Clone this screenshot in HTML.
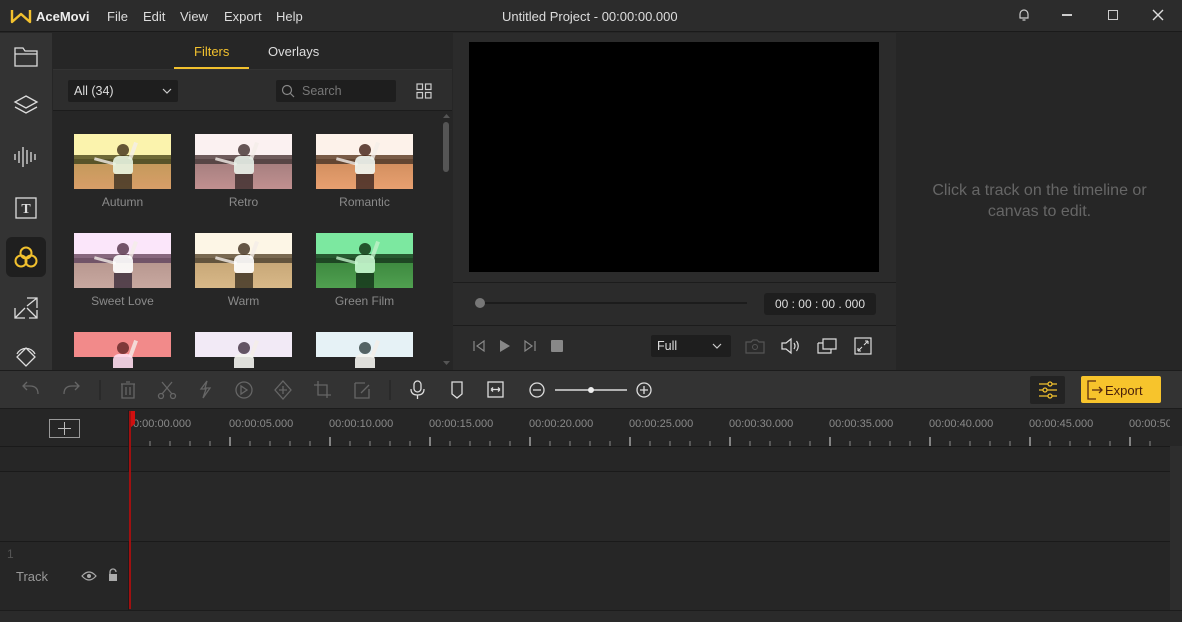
<!DOCTYPE html>
<html><head><meta charset="utf-8"><style>
*{box-sizing:border-box;margin:0;padding:0}
body{width:1182px;height:622px;overflow:hidden;background:#262626;font-family:"Liberation Sans","DejaVu Sans",sans-serif;color:#ddd;position:relative;font-size:12px}
.a{position:absolute}
.th{position:absolute;width:97px;height:55px;overflow:hidden}
.th .sky{position:absolute;left:0;top:0;width:100%;height:45%}
.th .tr{position:absolute;left:0;top:38%;width:100%;height:18%;opacity:.9}
.th .fd{position:absolute;left:0;top:55%;width:100%;height:45%}
.th .hair{position:absolute;left:43px;top:10px;width:12px;height:12px;border-radius:50%;opacity:.85}
.th .shirt{position:absolute;left:39px;top:22px;width:20px;height:18px;border-radius:6px 6px 3px 3px;background:#f4f4f0;opacity:.9}
.th .legs{position:absolute;left:40px;top:40px;width:18px;height:15px;opacity:.8}
.th .arm{position:absolute;left:57px;top:8px;width:4px;height:18px;background:#f4eee8;transform:rotate(20deg);opacity:.8}
.th .arm2{position:absolute;left:20px;top:26px;width:22px;height:3px;background:#f4eee8;transform:rotate(15deg);opacity:.8}
.lb{position:absolute;width:97px;text-align:center;color:#8a8a8a;font-size:12px}
.ico{position:absolute}
.tl{position:absolute;top:418px;color:#8a8a8a;font-size:11px}
</style></head><body>
<div class="a" style="left:0;top:0;width:1182px;height:32px;background:#2c2c2c;border-bottom:1px solid #1a1a1a"></div>
<svg class="ico" style="left:10px;top:8px" width="22" height="16" viewBox="0 0 22 16"><path d="M2 2 L2 14 L11 6 L20 14 L20 2" fill="none" stroke="#f2c12e" stroke-width="2.4" stroke-linejoin="round"/></svg>
<div class="a" style="left:36px;top:9px;font-weight:bold;font-size:13px;color:#eee">AceMovi</div>
<div class="a" style="left:107px;top:9px;font-size:13px;color:#ddd">File</div>
<div class="a" style="left:143px;top:9px;font-size:13px;color:#ddd">Edit</div>
<div class="a" style="left:180px;top:9px;font-size:13px;color:#ddd">View</div>
<div class="a" style="left:224px;top:9px;font-size:13px;color:#ddd">Export</div>
<div class="a" style="left:276px;top:9px;font-size:13px;color:#ddd">Help</div>
<div class="a" style="left:502px;top:9px;font-size:13px;color:#ddd">Untitled Project - 00:00:00.000</div>
<svg class="ico" style="left:1016px;top:7px" width="16" height="16" viewBox="0 0 16 16"><path d="M4 11 V7 a4 4 0 0 1 8 0 V11 H3.5 H12.5 M6.5 13 h3" fill="none" stroke="#ccc" stroke-width="1.2"/></svg>
<div class="a" style="left:1062px;top:14px;width:10px;height:2px;background:#ccc"></div>
<div class="a" style="left:1108px;top:10px;width:10px;height:10px;border:1.3px solid #ccc"></div>
<svg class="ico" style="left:1152px;top:9px" width="12" height="12"><path d="M1 1L11 11M11 1L1 11" stroke="#ddd" stroke-width="1.4"/></svg>

<div class="a" style="left:0;top:33px;width:52px;height:337px;background:#333"></div>
<svg class="ico" style="left:14px;top:46px" width="24" height="22" viewBox="0 0 24 22"><path d="M1 2h8l2 3h12v15H1z M1 8h22" fill="none" stroke="#ddd" stroke-width="1.3"/></svg>
<svg class="ico" style="left:13px;top:94px" width="26" height="26" viewBox="0 0 26 26"><path d="M13 2 L24 8 L13 14 L2 8Z M2 13 L13 19 L24 13" fill="none" stroke="#ddd" stroke-width="1.3"/></svg>
<svg class="ico" style="left:13px;top:146px" width="26" height="22" viewBox="0 0 26 22"><path d="M2 8v6M6 5v12M10 1v20M14 4v14M18 6v10M22 8v6" stroke="#ddd" stroke-width="1.3"/></svg>
<svg class="ico" style="left:15px;top:197px" width="22" height="22" viewBox="0 0 22 22"><rect x="1" y="1" width="20" height="20" fill="none" stroke="#ddd" stroke-width="1.3"/><text x="11" y="16" text-anchor="middle" font-family="Liberation Serif" font-weight="bold" font-size="14" fill="#ddd">T</text></svg>
<div class="a" style="left:6px;top:237px;width:40px;height:40px;background:#1f1f1f;border-radius:6px"></div>
<svg class="ico" style="left:12px;top:243px" width="28" height="28" viewBox="0 0 28 28"><g fill="none" stroke="#f2c12e" stroke-width="2"><circle cx="14" cy="10" r="5.5"/><circle cx="9" cy="18" r="5.5"/><circle cx="19" cy="18" r="5.5"/></g></svg>
<svg class="ico" style="left:13px;top:296px" width="26" height="24" viewBox="0 0 26 24"><path d="M2 12 L2 22 L12 22 M2 22 L12 12 M14 10 L24 2 M14 2 H24 V12 M14 12 L24 22 M24 14 V22 H16" fill="none" stroke="#ddd" stroke-width="1.3"/></svg>
<svg class="ico" style="left:13px;top:342px" width="26" height="28" viewBox="0 0 26 28"><path d="M13 6 L22 15 L13 24 L4 15Z M4 12 a10 10 0 0 1 18 0" fill="none" stroke="#ddd" stroke-width="1.3"/></svg>

<div class="a" style="left:53px;top:33px;width:399px;height:37px;background:#262626;border-bottom:1px solid #333"></div>
<div class="a" style="left:194px;top:44px;font-size:13px;color:#f2c12e">Filters</div>
<div class="a" style="left:174px;top:67px;width:75px;height:2px;background:#f2c12e"></div>
<div class="a" style="left:268px;top:44px;font-size:13px;color:#ddd">Overlays</div>
<div class="a" style="left:53px;top:70px;width:399px;height:41px;background:#2d2d2d;border-bottom:1px solid #1c1c1c"></div>
<div class="a" style="left:68px;top:80px;width:110px;height:22px;background:#1e1e1e;border-radius:2px"></div>
<div class="a" style="left:74px;top:84px;font-size:12.5px;color:#ddd">All (34)</div>
<svg class="ico" style="left:162px;top:88px" width="10" height="6"><path d="M1 1L5 5L9 1" fill="none" stroke="#ccc" stroke-width="1.2"/></svg>
<div class="a" style="left:276px;top:80px;width:120px;height:22px;background:#1e1e1e;border-radius:2px"></div>
<svg class="ico" style="left:281px;top:84px" width="14" height="14"><circle cx="6" cy="6" r="4.5" fill="none" stroke="#888" stroke-width="1.2"/><path d="M9.5 9.5L13 13" stroke="#888" stroke-width="1.2"/></svg>
<div class="a" style="left:302px;top:84px;font-size:12.5px;color:#777">Search</div>
<svg class="ico" style="left:416px;top:83px" width="16" height="16"><g fill="none" stroke="#ccc" stroke-width="1.2"><rect x="1" y="1" width="5.5" height="5.5"/><rect x="9.5" y="1" width="5.5" height="5.5"/><rect x="1" y="9.5" width="5.5" height="5.5"/><rect x="9.5" y="9.5" width="5.5" height="5.5"/></g></svg>
<div class="a" style="left:442px;top:112px;width:10px;height:258px;background:#262626"></div>
<div class="a" style="left:443px;top:122px;width:6px;height:50px;background:#555;border-radius:3px"></div>
<svg class="ico" style="left:442px;top:113px" width="9" height="6"><path d="M1 5L4.5 1L8 5Z" fill="#555"/></svg>
<svg class="ico" style="left:442px;top:360px" width="9" height="6"><path d="M1 1L4.5 5L8 1Z" fill="#555"/></svg>

<div class="th" style="left:74px;top:134px"><div class="sky" style="background:#fbf3ad"></div><div class="tr" style="background:#5e5a2a"></div><div class="fd" style="background:linear-gradient(#c59a5c,#d89e68)"></div><div class="hair" style="background:#4a3a20"></div><div class="arm"></div><div class="arm2"></div><div class="shirt" style="background:#e8f4e0"></div><div class="legs" style="background:#3a3020"></div></div>
<div class="th" style="left:195px;top:134px"><div class="sky" style="background:#fbf1f1"></div><div class="tr" style="background:#5e4a4a"></div><div class="fd" style="background:linear-gradient(#a88080,#c09090)"></div><div class="hair" style="background:#4a3a3a"></div><div class="arm"></div><div class="arm2"></div><div class="shirt" style="background:#e8f0e8"></div><div class="legs" style="background:#3a2a2a"></div></div>
<div class="th" style="left:316px;top:134px"><div class="sky" style="background:#fdf2ea"></div><div class="tr" style="background:#6a4a34"></div><div class="fd" style="background:linear-gradient(#d49060,#e8a070)"></div><div class="hair" style="background:#4a2a20"></div><div class="arm"></div><div class="arm2"></div><div class="shirt" style="background:#f0f6f2"></div><div class="legs" style="background:#3a2420"></div></div>
<div class="lb" style="left:74px;top:195px">Autumn</div>
<div class="lb" style="left:195px;top:195px">Retro</div>
<div class="lb" style="left:316px;top:195px">Romantic</div>

<div class="th" style="left:74px;top:233px"><div class="sky" style="background:#fbe6fa"></div><div class="tr" style="background:#7a5a70"></div><div class="fd" style="background:linear-gradient(#b89890,#c8a8a0)"></div><div class="hair" style="background:#5a3a50"></div><div class="arm"></div><div class="arm2"></div><div class="shirt" style="background:#fff"></div><div class="legs" style="background:#3a2a3a"></div></div>
<div class="th" style="left:195px;top:233px"><div class="sky" style="background:#fdf6e6"></div><div class="tr" style="background:#6a5a40"></div><div class="fd" style="background:linear-gradient(#c8a878,#d8b888)"></div><div class="hair" style="background:#4a3a28"></div><div class="arm"></div><div class="arm2"></div><div class="shirt" style="background:#fff"></div><div class="legs" style="background:#3a3020"></div></div>
<div class="th" style="left:316px;top:233px"><div class="sky" style="background:#7ce8a0"></div><div class="tr" style="background:#1e4a24"></div><div class="fd" style="background:linear-gradient(#3e8a40,#50a050)"></div><div class="hair" style="background:#143a18"></div><div class="arm" style="background:#c0f0c8"></div><div class="arm2" style="background:#c0f0c8"></div><div class="shirt" style="background:#c8f8d0"></div><div class="legs" style="background:#123018"></div></div>
<div class="lb" style="left:74px;top:294px">Sweet Love</div>
<div class="lb" style="left:195px;top:294px">Warm</div>
<div class="lb" style="left:316px;top:294px">Green Film</div>

<div class="th" style="left:74px;top:332px;height:36px"><div class="sky" style="background:#f28a8a;height:70%"></div><div class="hair" style="background:#6a2a2a"></div><div class="arm"></div><div class="shirt" style="background:#fde"></div></div>
<div class="th" style="left:195px;top:332px;height:36px"><div class="sky" style="background:#f2eaf6;height:70%"></div><div class="hair" style="background:#4a3a4a"></div><div class="arm"></div><div class="shirt"></div></div>
<div class="th" style="left:316px;top:332px;height:36px"><div class="sky" style="background:#e6f2f6;height:70%"></div><div class="hair" style="background:#3a4a4a"></div><div class="arm"></div><div class="shirt"></div></div>

<div class="a" style="left:453px;top:33px;width:443px;height:337px;background:#2b2b2b"></div>
<div class="a" style="left:469px;top:42px;width:410px;height:230px;background:#000"></div>
<div class="a" style="left:453px;top:282px;width:443px;height:1px;background:#1c1c1c"></div>
<div class="a" style="left:453px;top:325px;width:443px;height:1px;background:#1c1c1c"></div>
<div class="a" style="left:480px;top:302px;width:267px;height:2px;background:#1c1c1c"></div>
<div class="a" style="left:475px;top:298px;width:10px;height:10px;border-radius:50%;background:#777"></div>
<div class="a" style="left:764px;top:293px;width:112px;height:22px;background:#1e1e1e;border-radius:3px"></div>
<div class="a" style="left:764px;top:297px;width:112px;text-align:center;font-size:12px;color:#ddd;white-space:pre">00 : 00 : 00 . 000</div>
<svg class="ico" style="left:472px;top:339px" width="14" height="14"><path d="M2 2v10M12 2L5 7L12 12Z" fill="none" stroke="#888" stroke-width="1.2"/></svg>
<svg class="ico" style="left:498px;top:339px" width="14" height="14"><path d="M2 1L12 7L2 13Z" fill="#888"/></svg>
<svg class="ico" style="left:523px;top:339px" width="14" height="14"><path d="M12 2v10M2 2L9 7L2 12Z" fill="none" stroke="#888" stroke-width="1.2"/></svg>
<div class="a" style="left:551px;top:340px;width:12px;height:12px;background:#888;border-radius:1px"></div>
<div class="a" style="left:651px;top:335px;width:80px;height:22px;background:#1e1e1e;border-radius:2px"></div>
<div class="a" style="left:657px;top:339px;font-size:12.5px;color:#ddd">Full</div>
<svg class="ico" style="left:712px;top:343px" width="10" height="6"><path d="M1 1L5 5L9 1" fill="none" stroke="#ccc" stroke-width="1.2"/></svg>
<svg class="ico" style="left:745px;top:338px" width="20" height="16"><path d="M1 4h5l2-2h4l2 2h5v11H1z" fill="none" stroke="#555" stroke-width="1.2"/><circle cx="10" cy="9" r="2.5" fill="none" stroke="#555"/></svg>
<svg class="ico" style="left:780px;top:337px" width="22" height="18"><path d="M2 6h4l5-4v14l-5-4H2z M14 6q2 3 0 6 M16.5 4q3.5 5 0 10" fill="none" stroke="#ddd" stroke-width="1.2"/></svg>
<svg class="ico" style="left:817px;top:337px" width="20" height="18"><path d="M6 2h13v10H6z M1 6h5 M1 6v10h13v-4" fill="none" stroke="#ddd" stroke-width="1.2"/></svg>
<svg class="ico" style="left:854px;top:337px" width="18" height="18"><rect x="1" y="1" width="16" height="16" fill="none" stroke="#ddd" stroke-width="1.2"/><path d="M4 14l4-4M4 14v-3M4 14h3M14 4l-4 4M14 4v3M14 4h-3" stroke="#ddd" stroke-width="1.1" fill="none"/></svg>

<div class="a" style="left:897px;top:33px;width:285px;height:337px;background:#262626"></div>
<div class="a" style="left:897px;top:180px;width:285px;text-align:center;font-size:16px;color:#666;line-height:21px">Click a track on the timeline or<br>canvas to edit.</div>

<div class="a" style="left:0;top:370px;width:1182px;height:39px;background:#333;border-top:1px solid #1c1c1c;border-bottom:1px solid #1c1c1c"></div>
<svg class="ico" style="left:0;top:378px" width="700" height="24" viewBox="0 0 700 24">
<g fill="none" stroke="#666" stroke-width="1.3">
<path d="M38 16 q0-8 -8-8 h-6 M27 4 l-4 4 4 4"/>
<path d="M64 16 q0-8 8-8 h6 M75 4 l4 4 -4 4"/>
<path d="M121 6h14M126 4h4 M122 6v14h12v-14 M126 9v8M130 9v8"/>
<path d="M162 4l10 12M172 4l-10 12"/><circle cx="161" cy="18" r="2.5"/><circle cx="173" cy="18" r="2.5"/>
<path d="M207 3l-6 8h5l-3 9 7-10h-5z"/>
<circle cx="244" cy="12" r="8"/><path d="M241 8v8l6-4z"/>
<path d="M283 3l8 9-8 9-8-9z M283 8v8M279 12h8"/>
<path d="M318 3v14h13 M314 7h13v13"/>
<path d="M355 5h10 M355 5v15h14v-9 M361 15l8-8"/>
</g>
<path d="M100 2v20M390 2v20" stroke="#222" stroke-width="1"/>
<g fill="none" stroke="#ddd" stroke-width="1.3">
<rect x="414" y="3" width="7" height="11" rx="3.5"/><path d="M411 11q0 6 6.5 6t6.5-6M417.5 17v4"/>
<path d="M452 4h10v12l-5 4-5-4z"/>
<rect x="488" y="4" width="15" height="15"/><path d="M491 11.5h9M491 11.5l2-2M491 11.5l2 2M500 11.5l-2-2M500 11.5l-2 2"/>
<circle cx="537" cy="12" r="7"/><path d="M533 12h8"/>
<circle cx="644" cy="12" r="7"/><path d="M640 12h8M644 8v8"/>
</g>
<path d="M555 12h72" stroke="#ddd" stroke-width="1.5"/><circle cx="591" cy="12" r="3" fill="#eee"/>
</svg>
<div class="a" style="left:1030px;top:376px;width:35px;height:28px;background:#232323;border-radius:2px"></div>
<svg class="ico" style="left:1038px;top:380px" width="20" height="20"><g stroke="#f2c12e" stroke-width="1.3" fill="none"><path d="M1 4h18M1 10h18M1 16h18"/><circle cx="12" cy="4" r="2" fill="#232323"/><circle cx="7" cy="10" r="2" fill="#232323"/><circle cx="12" cy="16" r="2" fill="#232323"/></g></svg>
<div class="a" style="left:1081px;top:376px;width:80px;height:27px;background:#f7c42c;border-radius:2px"></div>
<svg class="ico" style="left:1086px;top:380px" width="18" height="20"><path d="M10 1H2v18h8 M6 10h10M13 7l3 3-3 3" fill="none" stroke="#5a2a10" stroke-width="1.3"/></svg>
<div class="a" style="left:1105px;top:383px;font-size:13px;color:#4a200a">Export</div>

<div class="a" style="left:0;top:410px;width:1182px;height:212px;background:#262626"></div>
<div class="a" style="left:0;top:410px;width:129px;height:212px;background:#262626;border-right:1px solid #1c1c1c"></div>
<div class="a" style="left:49px;top:419px;width:31px;height:19px;border:1px solid #999"></div>
<div class="a" style="left:58px;top:428px;width:13px;height:1px;background:#bbb"></div>
<div class="a" style="left:64px;top:422px;width:1px;height:13px;background:#bbb"></div>
<div class="a" style="left:0;top:471px;width:1170px;height:70px;background:#282828"></div>
<div class="a" style="left:0;top:446px;width:1170px;height:1px;background:#1a1a1a"></div>
<div class="a" style="left:0;top:471px;width:1170px;height:1px;background:#1a1a1a"></div>
<div class="a" style="left:0;top:541px;width:1170px;height:1px;background:#1a1a1a"></div>
<div class="a" style="left:1170px;top:446px;width:12px;height:176px;background:#2d2d2d"></div>
<div class="a" style="left:0;top:610px;width:1182px;height:12px;background:#2a2a2a;border-top:1px solid #1c1c1c"></div>
<svg class="ico" style="left:130px;top:436px" width="1040" height="10"><g stroke="#888" stroke-width="1">
<path d="M20 5v5M40 5v5M60 5v5M80 5v5M120 5v5M140 5v5M160 5v5M180 5v5M220 5v5M240 5v5M260 5v5M280 5v5M320 5v5M340 5v5M360 5v5M380 5v5M420 5v5M440 5v5M460 5v5M480 5v5M520 5v5M540 5v5M560 5v5M580 5v5M620 5v5M640 5v5M660 5v5M680 5v5M720 5v5M740 5v5M760 5v5M780 5v5M820 5v5M840 5v5M860 5v5M880 5v5M920 5v5M940 5v5M960 5v5M980 5v5M1020 5v5"/>
</g><g stroke="#ddd" stroke-width="1"><path d="M100 1v9M200 1v9M300 1v9M400 1v9M500 1v9M600 1v9M700 1v9M800 1v9M900 1v9M1000 1v9"/></g></svg>
<div class="tl" style="left:133px">0:00:00.000</div>
<div class="tl" style="left:229px">00:00:05.000</div>
<div class="tl" style="left:329px">00:00:10.000</div>
<div class="tl" style="left:429px">00:00:15.000</div>
<div class="tl" style="left:529px">00:00:20.000</div>
<div class="tl" style="left:629px">00:00:25.000</div>
<div class="tl" style="left:729px">00:00:30.000</div>
<div class="tl" style="left:829px">00:00:35.000</div>
<div class="tl" style="left:929px">00:00:40.000</div>
<div class="tl" style="left:1029px">00:00:45.000</div>
<div class="tl" style="left:1129px;width:41px;overflow:hidden;white-space:nowrap">00:00:50.000</div>
<div class="a" style="left:129px;top:411px;width:6px;height:18px;background:#d01010;clip-path:polygon(0 0,100% 0,100% 70%,0 100%)"></div>
<div class="a" style="left:129px;top:411px;width:2px;height:198px;background:#a01010"></div>
<div class="a" style="left:7px;top:547px;font-size:12px;color:#555">1</div>
<div class="a" style="left:16px;top:569px;font-size:13px;color:#999">Track</div>
<svg class="ico" style="left:81px;top:570px" width="16" height="12"><path d="M1 6q7-8 14 0q-7 8-14 0z" fill="none" stroke="#aaa" stroke-width="1.2"/><circle cx="8" cy="6" r="2" fill="#aaa"/></svg>
<svg class="ico" style="left:107px;top:568px" width="12" height="14"><path d="M3 6V4a3 3 0 0 1 6 0" fill="none" stroke="#aaa" stroke-width="1.3"/><rect x="2" y="6" width="8" height="7" fill="#aaa"/></svg>
</body></html>
